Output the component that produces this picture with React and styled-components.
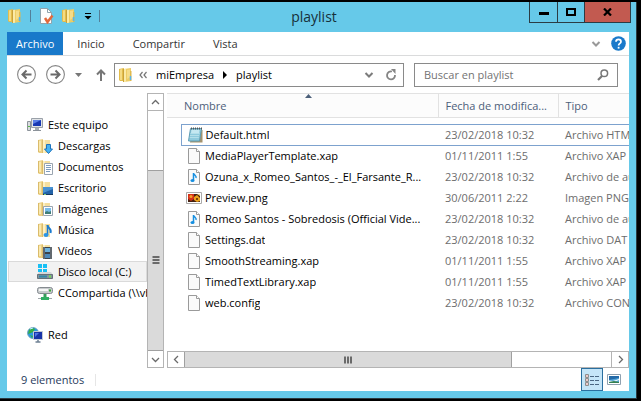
import React from "react";
import styled, { createGlobalStyle, css } from "styled-components";

const GlobalStyle = createGlobalStyle`
  *, *::before, *::after { box-sizing: border-box; }
  body {
    margin: 0;
    background: #000;
    font: 11px/16px "Open Sans", "Noto Sans", sans-serif;
    color: #000;
  }
  button, input { font: inherit; color: inherit; }
  svg { display: block; flex: none; }
`;

const c = {
  frame: "#66c9e9",
  line: "#dadbdc",
  box: "#8a8a8a",
  thumb: "#dadada",
  header: "#4c607a",
  muted: "#6d6d6d",
};

/* ---------- layout ---------- */

const Screen = styled.div`
  min-height: 100vh;
  padding: 2px 4px 2px 0;
  display: flex;
`;

const Window = styled.main`
  flex: 1;
  min-width: 0;
  display: flex;
  flex-direction: column;
  padding: 0 7px 7px;
  background: ${c.frame};
  border: solid #2b3a40;
  border-width: 0 1px 1px 0;
`;

const TitleBar = styled.header`
  height: 30px;
  flex: none;
  display: grid;
  grid-template-columns: 1fr auto 1fr;
  align-items: start;
`;

const Title = styled.h1`
  margin: 0;
  padding-right: 8px;
  font-size: 14px;
  font-weight: 400;
  line-height: 30px;
  color: #17303a;
`;

const QuickAccess = styled.div`
  display: flex;
  align-items: center;
  height: 28px;
  gap: 7px;
`;

const PlainButton = styled.button`
  display: flex;
  align-items: center;
  justify-content: center;
  flex: none;
  width: ${(p) => p.$width || 16}px;
  padding: 0;
  border: 0;
  background: none;
`;

const Divider = styled.span`
  flex: none;
  width: 1px;
  height: 12px;
  background: ${(p) => p.$color || "#52809a"};
`;

const CaptionButtons = styled.div`
  justify-self: end;
  display: flex;
  margin-right: -2px;
  border: solid #2b3c44;
  border-width: 0 1px 1px;
`;

const CaptionButton = styled.button`
  width: ${(p) => p.$width || 27}px;
  height: 20px;
  display: flex;
  align-items: center;
  justify-content: center;
  padding: 0;
  border: 0;
  background: ${(p) => (p.$close ? "#c25a50" : "transparent")};
  &:not(:first-child) { border-left: 1px solid #2b3c44; }
`;

const Client = styled.div`
  flex: 1;
  display: flex;
  flex-direction: column;
  min-width: 0;
  background: #fff;
`;

const Ribbon = styled.div`
  flex: none;
  display: flex;
  align-items: stretch;
  height: 24px;
  border-bottom: 1px solid ${c.line};
`;

const Tab = styled.button`
  padding: 1px 14px 0;
  border: 0;
  background: none;
  color: #333;
  ${(p) =>
    p.$primary &&
    css`
      padding: 0 9px;
      background: #1979ca;
      color: #fff;
    `}
`;

const RibbonTools = styled.div`
  margin-left: auto;
  padding-right: 3px;
  display: flex;
  align-items: center;
  gap: 6px;
`;

const NavigationBar = styled.div`
  flex: none;
  display: flex;
  align-items: center;
  height: 37px;
  padding: 0 11px 0 10px;
`;

const HistoryButtons = styled.div`
  flex: none;
  display: flex;
  align-items: center;
  gap: 10px;
  margin-right: 4px;
`;

const AddressBox = styled.div`
  flex: 279 1 0;
  min-width: 0;
  height: 24px;
  display: flex;
  align-items: center;
  border: 1px solid ${c.box};
  padding: 0 6px 0 3px;
`;

const Crumb = styled.a`
  color: #000;
  text-decoration: none;
  padding: 0 9px;
`;

const CrumbMark = styled.span`
  display: flex;
  margin-left: 5px;
`;

const AddressTools = styled.div`
  margin-left: auto;
  display: flex;
  align-items: center;
  gap: 8px;
`;

const SearchBox = styled.label`
  flex: 185 1 0;
  min-width: 0;
  height: 24px;
  margin-left: 10px;
  display: flex;
  align-items: center;
  border: 1px solid ${c.box};
  padding: 0 8px 0 9px;
`;

const SearchInput = styled.input`
  flex: 1;
  min-width: 0;
  padding: 0;
  border: 0;
  outline: 0;
  background: none;
  &::placeholder { color: #737373; opacity: 1; }
`;

const Panes = styled.div`
  flex: 1;
  min-height: 0;
  display: flex;
`;

const Sidebar = styled.div`
  flex: none;
  width: 157px;
  display: flex;
`;

const Tree = styled.nav`
  flex: 1;
  min-width: 0;
  overflow: hidden;
  padding: 21px 0 0 1px;
`;

const TreeItem = styled.a`
  display: flex;
  align-items: center;
  gap: 5px;
  height: 21px;
  margin-top: ${(p) => (p.$spaced ? 21 : 0)}px;
  padding-left: ${(p) => (p.$child ? 28 : 18)}px;
  border: 1px solid ${(p) => (p.$selected ? "#dadada" : "transparent")};
  background: ${(p) => (p.$selected ? "#f2f2f2" : "transparent")};
  color: #000;
  text-decoration: none;
  white-space: nowrap;
`;

const Scrollbar = styled.div`
  flex: none;
  display: flex;
  border: 1px solid #b4b4b4;
  ${(p) =>
    p.$vertical
      ? css`
          width: 17px;
          flex-direction: column;
        `
      : css`
          height: 17px;
        `}
`;

const ScrollButton = styled.button`
  flex: none;
  width: ${(p) => (p.$vertical ? 15 : 16)}px;
  height: ${(p) => (p.$vertical ? 16 : 15)}px;
  display: flex;
  align-items: center;
  justify-content: center;
  padding: 0;
  border: 0;
  background: #fff;
`;

const Track = styled.div`
  flex: ${(p) => p.$size} 1 0;
`;

const Thumb = styled.div`
  flex: ${(p) => p.$size} 1 0;
  display: flex;
  align-items: center;
  justify-content: center;
  background: ${c.thumb};
  border: solid #a0a0a0;
  border-width: ${(p) => (p.$vertical ? "1px 0" : "0 1px")};
`;

const EndLine = styled.span`
  flex: none;
  width: ${(p) => (p.$vertical ? "auto" : "1px")};
  height: ${(p) => (p.$vertical ? "1px" : "auto")};
  background: #b4b4b4;
`;

const FilePane = styled.section`
  flex: 1;
  min-width: 0;
  margin-left: 3px;
  display: flex;
  flex-direction: column;
`;

const FileList = styled.div`
  flex: 1;
  min-height: 0;
  overflow: hidden;
`;

const FileTable = styled.table`
  width: 640px;
  table-layout: fixed;
  border-collapse: collapse;
  tbody::before {
    content: "";
    display: block;
    height: 6px;
  }
`;

const HeaderCell = styled.th`
  position: relative;
  height: 24px;
  padding: 0 0 0 ${(p) => (p.$first ? 17 : 7)}px;
  border: 1px solid #e2e2e2;
  border-left: ${(p) => (p.$first ? "0" : "1px solid #e2e2e2")};
  background: #fcfcfc;
  font-weight: 400;
  text-align: left;
`;

const SortButton = styled.button`
  display: block;
  padding: 0;
  border: 0;
  background: none;
  color: ${c.header};
  white-space: nowrap;
`;

const SortMark = styled.svg`
  position: absolute;
  top: 0;
  left: 50%;
  margin-left: 3px;
`;

const FileRow = styled.tr`
  height: 21px;
  td {
    border: solid ${(p) => (p.$focused ? "#7da2ce" : "transparent")};
    border-width: ${(p) => (p.$focused ? "1px 0" : "0")};
  }
  td:nth-child(1) { border: 0; }
  td:nth-child(2) { border-left-width: ${(p) => (p.$focused ? 1 : 0)}px; }
`;

const Cell = styled.td`
  padding: 0 0 0 7px;
  color: ${c.muted};
  white-space: nowrap;
  overflow: hidden;
`;

const GutterCell = styled.td`
  padding: 0;
`;

const FileName = styled.a`
  display: flex;
  align-items: center;
  gap: 3px;
  margin-left: -2px;
  color: #000;
  text-decoration: none;
  span {
    min-width: 0;
    overflow: hidden;
    text-overflow: ellipsis;
  }
`;

const StatusBar = styled.footer`
  flex: none;
  display: flex;
  align-items: center;
  height: 23px;
  padding: 0 4px 0 14px;
  color: #1e395b;
`;

const StatusText = styled.span`
  margin-right: 11px;
`;

const ViewSwitch = styled.div`
  margin-left: auto;
  display: flex;
`;

const ViewButton = styled.button`
  width: 22px;
  height: 23px;
  display: flex;
  align-items: center;
  justify-content: center;
  padding: 0;
  border: 1px solid ${(p) => (p.$active ? "#2a6f9f" : "transparent")};
  background: ${(p) => (p.$active ? "#c5e5f8" : "none")};
`;

/* ---------- icons ---------- */

const Svg = ({ size = 16, w, h, children }) => (
  <svg
    width={w || size}
    height={h || size}
    viewBox={`0 0 ${w || size} ${h || size}`}
    fill="none"
    aria-hidden="true"
  >
    {children}
  </svg>
);

const Folder = () => (
  <Svg>
    <path d="M1 2l5-1v13H2l-1-1z" fill="#e3bd4c" />
    <path d="M2 2.500l2-.5v11H2z" fill="#f5db83" />
    <path d="M6 2l7-1v13l-7 1z" fill="#edcd66" />
    <path d="M6 2l2-.300V14.700L6 15z" fill="#fbeaa6" />
    <path d="M9 3l3-.500V10L9 12z" fill="#f5dc88" />
    <path d="M5.500 2v13" stroke="#c9a23a" />
    <path d="M12 4h1.500v10H12z" fill="#e0b94e" />
    <path d="M12.500 9v4" stroke="#58b5ea" strokeWidth="1.500" />
  </Svg>
);

const FolderWith = ({ children }) => (
  <Svg>
    <path d="M1 2l5-1v14H2l-1-1z" fill="#ecd083" />
    <path d="M2 3l2-.500V13H2z" fill="#f9e9b0" />
    <path d="M6 2h7v13H6z" fill="#f5dfa0" />
    <path d="M6 2h2v13H6z" fill="#fdf0c2" />
    <path d="M5.500 2v13M1.500 2v12" stroke="#dabb6b" />
    {children}
  </Svg>
);

const Downloads = () => (
  <FolderWith>
    <path d="M9.500 6.500h4v4.500h2l-4 4.500-4-4.500h2z" fill="#45b2f2" stroke="#1c73bd" />
  </FolderWith>
);

const Documents = () => (
  <FolderWith>
    <path d="M7.500 4.500h8v11h-8z" fill="#fff" stroke="#9aa5b0" />
    <path d="M9 6.500h5M9 8.500h5M9 10.500h5M9 12.500h4" stroke="#7d9cbe" />
  </FolderWith>
);

const Desktop = () => (
  <FolderWith>
    <path d="M6 7h10v8H6z" fill="#2363a8" />
    <path d="M6 7h10v2l-10 4z" fill="#4992d2" />
    <path d="M6 14.500h10" stroke="#183a61" />
    <path d="M7 14.500h2" stroke="#7fd07a" />
  </FolderWith>
);

const Pictures = () => (
  <FolderWith>
    <path d="M6.500 5.500h9v9h-9z" fill="#fff" stroke="#9aa5b0" />
    <path d="M8 7h6v6H8z" fill="#79bdea" />
    <path d="M8 13v-2l2-1 2 1 2-1v3z" fill="#3f7d78" />
  </FolderWith>
);

const Music = () => (
  <FolderWith>
    <path d="M10.500 3c0 4 4.500 3 3 8" stroke="#1a7bd0" strokeWidth="2" />
    <path d="M10.500 3v10" stroke="#1a7bd0" strokeWidth="1.500" />
    <ellipse cx="9" cy="13" rx="2.500" ry="2" fill="#2b95e6" />
  </FolderWith>
);

const Videos = () => (
  <FolderWith>
    <path d="M6 4h9v12H6z" fill="#3b4249" />
    <path d="M8 5h5v4H8z" fill="#6bb1dc" />
    <path d="M8 11h5v4H8z" fill="#4c88b9" />
    <path d="M7 4.500v11M14 4.500v11" stroke="#d6dde2" strokeDasharray="1 1" />
  </FolderWith>
);

const Computer = () => (
  <Svg>
    <path d="M.5 4.500h3v9h-3z" fill="#d9dcdf" stroke="#8c939a" />
    <path d="M1 9.500h2" stroke="#55b844" />
    <path d="M4.500 1.500h11v9h-11z" fill="#e0e3e6" stroke="#9aa1a9" />
    <path d="M6 3h8v6H6z" fill="#1838b4" />
    <path d="M6 3h8L6 7z" fill="#5b80e8" />
    <path d="M8 11h4v2H8z" fill="#a6adb4" />
    <path d="M6 13.500h8" stroke="#8c939a" />
  </Svg>
);

const Disk = () => (
  <Svg>
    <path d="M1 0h4v4H1zM6 0h4v4H6zM1 5h4v3H1zM6 5h4v3H6z" fill="#18c0f5" />
    <path d="M2 8h12l2 3H0z" fill="#d3d7d9" />
    <path d="M.5 10.500h15v4H.5z" fill="#85929b" stroke="#66727a" />
    <path d="M2 12.500h8" stroke="#3187a8" strokeWidth="2" />
    <path d="M12 12.500h2" stroke="#71e24d" strokeWidth="2" />
  </Svg>
);

const NetDisk = () => (
  <Svg>
    <rect x=".5" y="2.500" width="15" height="6" rx="2" fill="#c7cbcd" stroke="#858b90" />
    <path d="M2 5h9" stroke="#f6f6f6" strokeWidth="2" />
    <path d="M12 5.500h2" stroke="#3aa93a" strokeWidth="2" />
    <path d="M8 9v4" stroke="#3a9b5c" strokeWidth="3" />
    <path d="M1 13.500h14" stroke="#a0a7ab" />
    <path d="M4 13.500h8" stroke="#2fae62" strokeWidth="3" />
  </Svg>
);

const Network = () => (
  <Svg>
    <circle cx="6" cy="6" r="5.500" fill="#2b9ae0" stroke="#6b9ab5" strokeWidth=".8" />
    <path d="M2 3c2-2 5-2 6-1L6 5 4 6 1 7zM3 8l3 1-1 2z" fill="#35ae45" />
    <path d="M3 2l3-1" stroke="#c5f2ff" />
    <path d="M6.500 4.500h9v8h-9z" fill="#1833a8" stroke="#c2cad4" />
    <path d="M8 6h4l-4 4z" fill="#4d74e4" />
    <path d="M11 13v2M8.500 15h5" stroke="#6f8194" strokeWidth="1.500" />
  </Svg>
);

const PageShape = () => (
  <>
    <path d="M2.500.5h8l3 3v12h-11z" fill="#fafafa" stroke="#9a9a9a" />
    <path d="M10.500.5v3h3" fill="#fff" stroke="#9a9a9a" />
  </>
);

const Page = () => (
  <Svg>
    <PageShape />
  </Svg>
);

const AudioPage = () => (
  <Svg>
    <PageShape />
    <path d="M7.500 4v7M7.500 4c0 2 3.500 2.500 2.500 5" stroke="#168fe0" strokeWidth="1.500" />
    <ellipse cx="6.500" cy="11.500" rx="2" ry="1.500" fill="#168fe0" />
  </Svg>
);

const Notepad = () => (
  <Svg>
    <path d="M5 3h10.500v12.500H3z" fill="#a3936f" />
    <path d="M3.500 1.500h11l-2 12.500h-11z" fill="#8fcbdd" stroke="#5f9db5" />
    <path d="M4.500 3h8l-.5 3H4z" fill="#c4e8f1" />
    <path d="M3.500 6.500h9M3 8.500h9M2.800 10.500h9" stroke="#b3dfea" />
    <path d="M4 1.500h11" stroke="#555" strokeWidth="2" strokeDasharray="1 1" />
  </Svg>
);

const Picture = () => (
  <Svg>
    <path d="M.5 2.500h15v11H.5z" fill="#fff" stroke="#aaa" />
    <path d="M2 4h12v8H2z" fill="#46200f" />
    <path d="M2 4h6v5l-3 2-3-2z" fill="#d4301a" />
    <circle cx="5" cy="6.500" r="1.500" fill="#f4a128" />
    <path d="M8 7l3-2 3 3v3l-3 1-3-2z" fill="#eca21c" />
    <circle cx="11" cy="9" r="1" fill="#532407" />
    <path d="M11 4h3v2z" fill="#f3d78c" />
  </Svg>
);

const Properties = () => (
  <Svg>
    <path d="M2.500.5h7l4 4v11h-11z" fill="#fdfdfd" stroke="#8fa3ad" />
    <path d="M9.500.5v4h4" stroke="#8fa3ad" />
    <path d="M7 10l2.500 4 5-6.500" stroke="#e2683c" strokeWidth="2.500" />
  </Svg>
);

const Menu = () => (
  <Svg w={8} h={8}>
    <path d="M1 1.500h6" stroke="#000" />
    <path d="M.5 4h7L4 7.500z" fill="#000" />
  </Svg>
);

const ARROWS = {
  back: "M14.500 9.500h-9m4-4-4 4 4 4",
  forward: "M4.500 9.500h9m-4-4 4 4-4 4",
};

const Circled = ({ dir }) => (
  <Svg size={19}>
    <circle cx="9.500" cy="9.500" r="8.900" stroke="#858585" strokeWidth="1.100" />
    <path d={ARROWS[dir]} stroke="#6a6a6a" strokeWidth="2" />
  </Svg>
);

const Up = () => (
  <Svg w={10} h={12}>
    <path d="M5 12V2M1 5.500l4-4 4 4" stroke="#767676" strokeWidth="2" />
  </Svg>
);

const SmallCaret = () => (
  <Svg w={7} h={4}>
    <path d="M0 0h7L3.500 4z" fill="#777" />
  </Svg>
);

const Chevron = ({ color = "#7c7c7c" }) => (
  <Svg w={10} h={8}>
    <path d="M1.500 2 5 5.500 8.500 2" stroke={color} strokeWidth="2" />
  </Svg>
);

const Reload = () => (
  <Svg w={12} h={12}>
    <path d="M7 2.500A4 4 0 1 0 10 6" stroke="#858585" strokeWidth="1.800" />
    <path d="M6 0h4.500v5z" fill="#858585" />
  </Svg>
);

const Search = () => (
  <Svg w={12} h={12}>
    <circle cx="7.300" cy="4.300" r="3.300" stroke="#777" strokeWidth="1.500" />
    <path d="M5 7 1 11" stroke="#777" strokeWidth="2.200" />
  </Svg>
);

const Help = () => (
  <Svg size={15}>
    <circle cx="7.500" cy="7.500" r="7.300" fill="#1979ca" />
    <path d="M5 5.700c0-3.200 5-3.200 5 0C10 7.500 7.600 7.300 7.600 9.500" stroke="#fff" strokeWidth="1.700" />
    <path d="M6.700 10.800h1.800v1.800H6.700z" fill="#fff" />
  </Svg>
);

const SCROLL_PATHS = {
  up: "M1 6l3.500-3.500L8 6",
  down: "M1 3l3.500 3.500L8 3",
  left: "M6 1 2.500 4.500 6 8",
  right: "M3 1l3.500 3.500L3 8",
};

const ScrollArrow = ({ dir }) => (
  <Svg size={9}>
    <path d={SCROLL_PATHS[dir]} stroke="#6a6a6a" strokeWidth="1.300" />
  </Svg>
);

const Grip = ({ vertical }) => (
  <Svg size={8}>
    <path
      d={vertical ? "M.5 1h7M.5 4h7M.5 7h7" : "M1 .5v7M4 .5v7M7 .5v7"}
      stroke="#6a6a6a"
      strokeWidth="2"
    />
  </Svg>
);

const DetailsView = () => (
  <Svg>
    <path d="M1.500 2.500h3v3h-3zM1.500 6.500h3v3h-3zM1.500 10.500h3v3h-3z" fill="#fff" stroke="#8e8e8e" />
    <path d="M2.500 4h1M2.500 8h1M2.500 12h1" stroke="#b72c2c" />
    <path d="M6 4.500h4m1 0h4M6 8.500h4m1 0h4M6 12.500h4m1 0h4" stroke="#4a6682" />
  </Svg>
);

const IconsView = () => (
  <Svg>
    <path d="M1.500 2.500h13v10h-13z" fill="#fff" stroke="#8fa1b0" />
    <path d="M3 4h10v7H3z" fill="#54a6da" />
    <path d="M3 4h10v2L3 8z" fill="#236aa8" />
    <path d="M3 8.500l4 .5 6-2v1l-5 2-5 1z" fill="#eef8fb" />
    <path d="M3 10l5-1 5 1v1H3z" fill="#348052" />
  </Svg>
);

/* ---------- data ---------- */

const TABS = ["Inicio", "Compartir", "Vista"];

const PLACES = [
  { label: "Este equipo", Icon: Computer },
  { label: "Descargas", Icon: Downloads, child: true },
  { label: "Documentos", Icon: Documents, child: true },
  { label: "Escritorio", Icon: Desktop, child: true },
  { label: "Imágenes", Icon: Pictures, child: true },
  { label: "Música", Icon: Music, child: true },
  { label: "Vídeos", Icon: Videos, child: true },
  { label: "Disco local (C:)", Icon: Disk, child: true, selected: true },
  { label: "CCompartida (\\\\vboxsrv)", Icon: NetDisk, child: true },
  { label: "Red", Icon: Network, spaced: true },
];

const FILES = [
  ["Default.html", Notepad, "23/02/2018 10:32", "Archivo HTML"],
  ["MediaPlayerTemplate.xap", Page, "01/11/2011 1:55", "Archivo XAP"],
  ["Ozuna_x_Romeo_Santos_-_El_Farsante_R...", AudioPage, "23/02/2018 10:32", "Archivo de audio"],
  ["Preview.png", Picture, "30/06/2011 2:22", "Imagen PNG"],
  ["Romeo Santos - Sobredosis (Official Vide...", AudioPage, "23/02/2018 10:32", "Archivo de audio"],
  ["Settings.dat", Page, "23/02/2018 10:32", "Archivo DAT"],
  ["SmoothStreaming.xap", Page, "01/11/2011 1:55", "Archivo XAP"],
  ["TimedTextLibrary.xap", Page, "01/11/2011 1:55", "Archivo XAP"],
  ["web.config", Page, "23/02/2018 10:32", "Archivo CONFIG"],
];

/* ---------- page ---------- */

const TitleArea = () => (
  <TitleBar>
    <QuickAccess>
      <PlainButton aria-label="Ventana"><Folder /></PlainButton>
      <Divider />
      <PlainButton aria-label="Propiedades"><Properties /></PlainButton>
      <PlainButton aria-label="Nueva carpeta"><Folder /></PlainButton>
      <PlainButton aria-label="Personalizar" $width={8}><Menu /></PlainButton>
      <Divider />
    </QuickAccess>
    <Title>playlist</Title>
    <CaptionButtons>
      <CaptionButton aria-label="Minimizar">
        <Svg w={10} h={10}><path d="M0 6.500h10" stroke="#000" strokeWidth="3" /></Svg>
      </CaptionButton>
      <CaptionButton aria-label="Maximizar">
        <Svg w={10} h={8}><path d="M1 1h8v6H1z" stroke="#000" strokeWidth="2" /></Svg>
      </CaptionButton>
      <CaptionButton aria-label="Cerrar" $width={46} $close>
        <Svg w={9} h={8}><path d="M1 .5l7 7M8 .5l-7 7" stroke="#000" strokeWidth="2.200" /></Svg>
      </CaptionButton>
    </CaptionButtons>
  </TitleBar>
);

const RibbonTabs = () => (
  <Ribbon>
    <Tab $primary>Archivo</Tab>
    {TABS.map((t) => <Tab key={t}>{t}</Tab>)}
    <RibbonTools>
      <PlainButton aria-label="Expandir la cinta"><Chevron color="#999" /></PlainButton>
      <PlainButton aria-label="Ayuda"><Help /></PlainButton>
    </RibbonTools>
  </Ribbon>
);

const Navigation = () => (
  <NavigationBar>
    <HistoryButtons>
      <PlainButton aria-label="Atrás" $width={19}><Circled dir="back" /></PlainButton>
      <PlainButton aria-label="Adelante" $width={19}><Circled dir="forward" /></PlainButton>
      <PlainButton aria-label="Recientes" $width={7}><SmallCaret /></PlainButton>
      <PlainButton aria-label="Subir" $width={18}><Up /></PlainButton>
    </HistoryButtons>
    <AddressBox>
      <Folder />
      <CrumbMark>
        <Svg w={8} h={8}>
          <path d="M3.500 1 1 4l2.500 3M7.500 1 5 4l2.500 3" stroke="#777" strokeWidth="1.200" />
        </Svg>
      </CrumbMark>
      <Crumb href="#miEmpresa">miEmpresa</Crumb>
      <Svg w={4} h={8}><path d="M0 0l4 4-4 4z" fill="#000" /></Svg>
      <Crumb href="#playlist">playlist</Crumb>
      <AddressTools>
        <PlainButton aria-label="Ubicaciones anteriores"><Chevron /></PlainButton>
        <PlainButton aria-label="Actualizar" $width={12}><Reload /></PlainButton>
      </AddressTools>
    </AddressBox>
    <SearchBox>
      <SearchInput type="text" aria-label="Buscar en playlist" placeholder="Buscar en playlist" />
      <Search />
    </SearchBox>
  </NavigationBar>
);

const SidePane = () => (
  <Sidebar>
    <Tree>
      {PLACES.map(({ label, Icon, child, selected, spaced }) => (
        <TreeItem key={label} href="#" $child={child} $selected={selected} $spaced={spaced}>
          <Icon />
          {label}
        </TreeItem>
      ))}
    </Tree>
    <Scrollbar $vertical>
      <ScrollButton $vertical aria-label="Desplazar arriba"><ScrollArrow dir="up" /></ScrollButton>
      <EndLine $vertical />
      <Track $size={59} />
      <Thumb $vertical $size={181}><Grip vertical /></Thumb>
      <ScrollButton $vertical aria-label="Desplazar abajo"><ScrollArrow dir="down" /></ScrollButton>
    </Scrollbar>
  </Sidebar>
);

const Files = () => (
  <FilePane>
    <FileList>
      <FileTable>
        <colgroup>
          <col width="14" />
          <col width="257" />
          <col width="120" />
          <col />
        </colgroup>
        <thead>
          <tr>
            <HeaderCell $first colSpan={2} scope="col" aria-sort="ascending">
              <SortButton>Nombre</SortButton>
              <SortMark width="7" height="4" viewBox="0 0 7 4" aria-hidden="true">
                <path d="M3.500 0 7 4H0z" fill={c.header} />
              </SortMark>
            </HeaderCell>
            <HeaderCell scope="col"><SortButton>Fecha de modifica...</SortButton></HeaderCell>
            <HeaderCell scope="col"><SortButton>Tipo</SortButton></HeaderCell>
          </tr>
        </thead>
        <tbody>
          {FILES.map(([name, Icon, date, type], i) => (
            <FileRow key={name} $focused={i === 0}>
              <GutterCell />
              <Cell>
                <FileName href="#">
                  <Icon />
                  <span>{name}</span>
                </FileName>
              </Cell>
              <Cell>{date}</Cell>
              <Cell>{type}</Cell>
            </FileRow>
          ))}
        </tbody>
      </FileTable>
    </FileList>
    <Scrollbar>
      <ScrollButton aria-label="Desplazar a la izquierda"><ScrollArrow dir="left" /></ScrollButton>
      <Thumb $size={328}><Grip /></Thumb>
      <Track $size={100} />
      <EndLine />
      <ScrollButton aria-label="Desplazar a la derecha"><ScrollArrow dir="right" /></ScrollButton>
    </Scrollbar>
  </FilePane>
);

const Status = () => (
  <StatusBar>
    <StatusText>9 elementos</StatusText>
    <Divider $color="#e6e6e6" />
    <ViewSwitch>
      <ViewButton $active aria-label="Detalles"><DetailsView /></ViewButton>
      <ViewButton aria-label="Iconos grandes"><IconsView /></ViewButton>
    </ViewSwitch>
  </StatusBar>
);

export default function App() {
  return (
    <Screen>
      <GlobalStyle />
      <Window>
        <TitleArea />
        <Client>
          <RibbonTabs />
          <Navigation />
          <Panes>
            <SidePane />
            <Files />
          </Panes>
          <Status />
        </Client>
      </Window>
    </Screen>
  );
}
